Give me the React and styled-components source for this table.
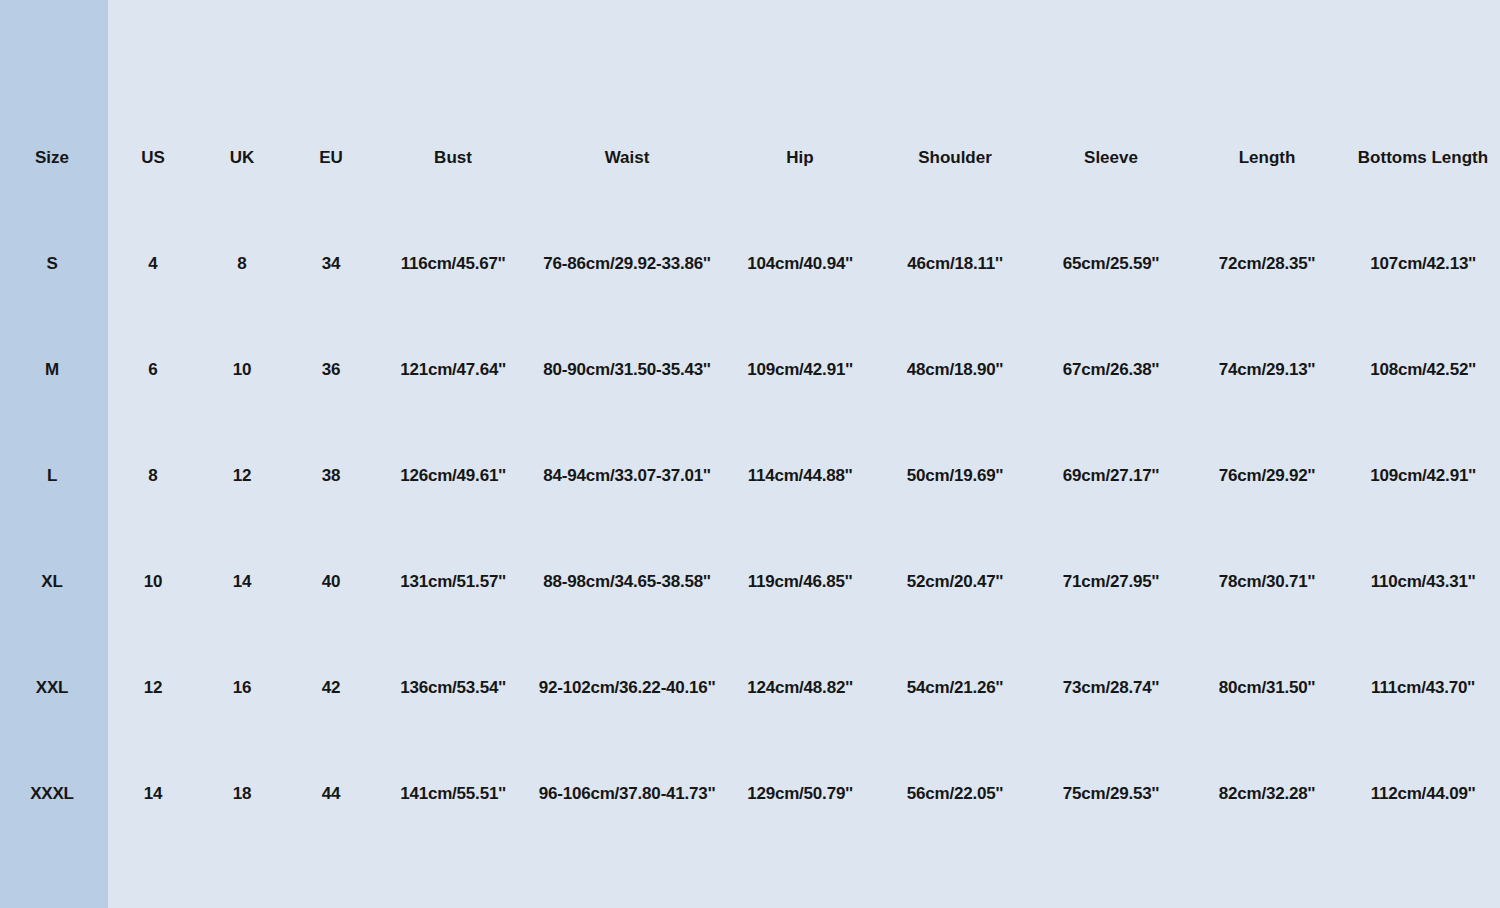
import styled, { createGlobalStyle } from "styled-components";

const GlobalStyle = createGlobalStyle`
  html, body {
    margin: 0;
    padding: 0;
    background: #dde6f0;
  }
  body {
    font-family: "Liberation Sans", Arial, sans-serif;
  }
`;

const Chart = styled.div`
  display: flex;
  width: 1500px;
  height: 908px;
  background: #dde6f0;
  color: #161616;
`;

const Column = styled.div`
  width: ${(p) => p.w}px;
  flex: none;
  display: flex;
  flex-direction: column;
  padding-top: 105px;
  background: ${(p) => (p.first ? "#b9cde4" : "transparent")};
`;

const Cell = styled.div`
  height: 106px;
  display: flex;
  align-items: center;
  justify-content: center;
  font-size: 17px;
  font-weight: 700;
  white-space: nowrap;
  letter-spacing: ${(p) => (p.head ? "0" : "-0.2px")};
  padding-right: ${(p) => (p.first ? "4px" : "0")};
`;

const columns = [
  { name: "Size", w: 108, values: ["S", "M", "L", "XL", "XXL", "XXXL"] },
  { name: "US", w: 90, values: ["4", "6", "8", "10", "12", "14"] },
  { name: "UK", w: 88, values: ["8", "10", "12", "14", "16", "18"] },
  { name: "EU", w: 90, values: ["34", "36", "38", "40", "42", "44"] },
  {
    name: "Bust",
    w: 154,
    values: ["116cm/45.67''", "121cm/47.64''", "126cm/49.61''", "131cm/51.57''", "136cm/53.54''", "141cm/55.51''"],
  },
  {
    name: "Waist",
    w: 194,
    values: [
      "76-86cm/29.92-33.86''",
      "80-90cm/31.50-35.43''",
      "84-94cm/33.07-37.01''",
      "88-98cm/34.65-38.58''",
      "92-102cm/36.22-40.16''",
      "96-106cm/37.80-41.73''",
    ],
  },
  {
    name: "Hip",
    w: 152,
    values: ["104cm/40.94''", "109cm/42.91''", "114cm/44.88''", "119cm/46.85''", "124cm/48.82''", "129cm/50.79''"],
  },
  {
    name: "Shoulder",
    w: 158,
    values: ["46cm/18.11''", "48cm/18.90''", "50cm/19.69''", "52cm/20.47''", "54cm/21.26''", "56cm/22.05''"],
  },
  {
    name: "Sleeve",
    w: 154,
    values: ["65cm/25.59''", "67cm/26.38''", "69cm/27.17''", "71cm/27.95''", "73cm/28.74''", "75cm/29.53''"],
  },
  {
    name: "Length",
    w: 158,
    values: ["72cm/28.35''", "74cm/29.13''", "76cm/29.92''", "78cm/30.71''", "80cm/31.50''", "82cm/32.28''"],
  },
  {
    name: "Bottoms Length",
    w: 154,
    values: ["107cm/42.13''", "108cm/42.52''", "109cm/42.91''", "110cm/43.31''", "111cm/43.70''", "112cm/44.09''"],
  },
];

const App = () => {
  return (
    <>
      <GlobalStyle />
      <Chart>
        {columns.map((col, i) => (
          <Column key={col.name} w={col.w} first={i === 0}>
            <Cell head first={i === 0}>{col.name}</Cell>
            {col.values.map((v, j) => (
              <Cell key={j} first={i === 0}>{v}</Cell>
            ))}
          </Column>
        ))}
      </Chart>
    </>
  );
};

export default App;
